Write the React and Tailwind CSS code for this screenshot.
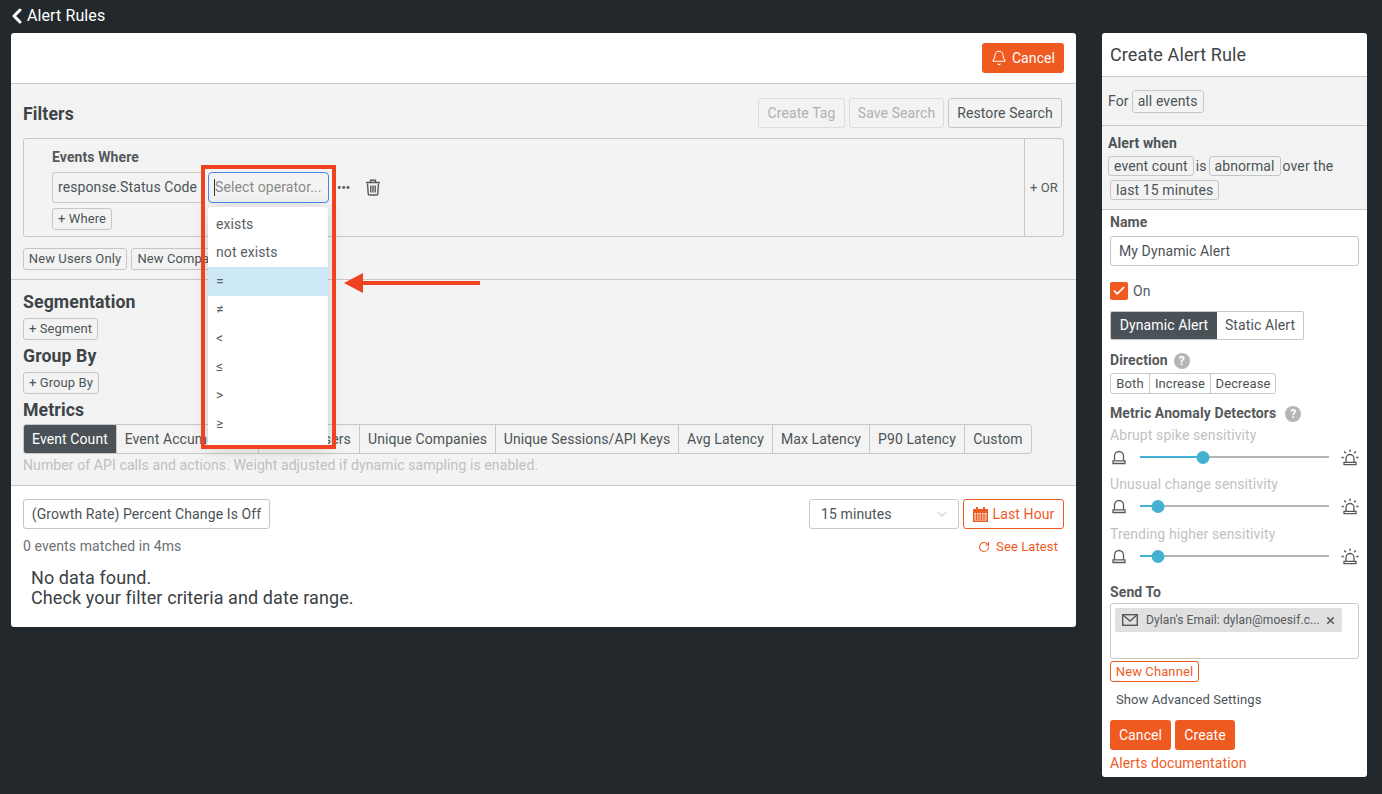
import { Bell, ChevronLeft, ChevronDown, RotateCw, X, Check } from 'lucide-react';

const btn = 'rounded-[3px] border border-[#c4c6c7] text-[#4c5357] whitespace-nowrap';
const orangeBtn = 'h-[30px] rounded-[3px] bg-[#ee5a1f] text-white text-[14px] whitespace-nowrap';
const tabs = [
  ['Event Count', 'w-[92px]'],
  ['Event Accumulation', 'w-[142px]'],
  ['Unique Users', 'w-[101px]'],
  ['Unique Companies', 'w-[136px]'],
  ['Unique Sessions/API Keys', 'w-[183px]'],
  ['Avg Latency', 'w-[94px]'],
  ['Max Latency', 'w-[97px]'],
  ['P90 Latency', 'w-[95px]'],
  ['Custom', 'w-[67px]'],
];
const operators = ['exists', 'not exists', '=', '≠', '<', '≤', '>', '≥'];

function Trash() {
  return (
    <svg width="16" height="17" viewBox="0 0 16 17" fill="none" stroke="#55595c" strokeWidth="1.4">
      <path d="M1 3.5h14M5.5 3V1.200h5V3" />
      <path d="M2.500 4.500l.7 10.300c0 .7.5 1.200 1.200 1.200h7.200c.7 0 1.200-.5 1.200-1.200l.7-10.300M5.800 6.500v7M8 6.500v7M10.200 6.500v7" />
    </svg>
  );
}

function Calendar() {
  return (
    <svg width="15" height="15" viewBox="0 0 15 15">
      <path fill="#ee5a1f" d="M3 0h2v2h5V0h2v2h3v13H0V2h3z" />
      <path fill="#fff" d="M1.500 6h12v7.500h-12z" />
      <path stroke="#ee5a1f" strokeWidth="1" d="M1.500 8h12M1.500 10h12M1.500 12h12M3.500 6v7.500M6 6v7.500M8.500 6v7.500M11 6v7.500" />
    </svg>
  );
}

function Mail() {
  return (
    <svg width="16" height="12" viewBox="0 0 16 12" fill="none" stroke="#55595c" strokeWidth="1.4">
      <rect x="0.7" y="0.7" width="14.6" height="10.6" />
      <path d="M1 1l7 6 7-6" />
    </svg>
  );
}

function Help() {
  return <span className="flex h-[16px] w-[16px] items-center justify-center rounded-full bg-[#b5b5b5] text-[12px] font-bold text-white">?</span>;
}

function QuietBell() {
  return (
    <svg width="14" height="15" viewBox="0 0 14 15" fill="none" stroke="#55595c" strokeWidth="1.3">
      <path d="M2.500 10.500V6a4.500 4.500 0 0 1 9 0v4.500" />
      <path d="M1 10.800h12v2.700H1z" />
    </svg>
  );
}

function LoudBell() {
  return (
    <svg width="18" height="17" viewBox="0 0 18 17" fill="none" stroke="#55595c" strokeWidth="1.3">
      <path d="M5 13V9.500a4 4 0 0 1 8 0V13" />
      <path d="M3 13.300h12v2.400H3z" />
      <path d="M9 0.500v2.500M3.200 2.500l1.700 1.800M14.800 2.500l-1.700 1.800M0.500 8.500h2.300M15.200 8.500h2.300" />
    </svg>
  );
}

function Slider({ label, pct, mt }) {
  return (
    <div className={mt}>
      <div className="h-[17px] text-[14px] leading-[17px] text-[#c2c2c2]">{label}</div>
      <div className="mt-[6px] flex h-[14px] items-center">
        <div className="ml-[2px] w-[28px]"><QuietBell /></div>
        <div className="relative h-[2px] w-[189px] bg-[#b3b3b3]">
          <div className="h-[2px] bg-[#44b1d3]" style={{ width: `${pct}%` }} />
          <div className="absolute top-[-5.5px] h-[13px] w-[13px] -translate-x-1/2 rounded-full bg-[#44b1d3]" style={{ left: `${pct}%` }} />
        </div>
        <div className="ml-[12px]"><LoudBell /></div>
      </div>
    </div>
  );
}

function OperatorSelect() {
  return (
    <div className="relative z-10 ml-[4px] w-[121px]">
      <div className="flex h-[31px] items-center rounded-[4px] border border-[#4a86e8] bg-[#f3f3f3] pl-[5px] text-[#8a8a8a]">
        <span className="h-[17px] w-px bg-[#333]" />
        <span className="whitespace-nowrap">Select operator...</span>
      </div>
      <div className="absolute left-0 top-[35px] h-[240px] w-[120px] overflow-hidden rounded-[4px] bg-white pt-[3px] shadow-[0_2px_18px_rgba(0,0,0,0.16)]">
        {operators.map((op) => (
          <div key={op} className={`flex h-[28.5px] items-center pl-[8px] text-[#5a6064] ${op === '=' ? 'bg-[#cde8f7]' : ''}`}>{op}</div>
        ))}
      </div>
      {/* annotation drawn over the screenshot */}
      <div className="absolute left-[-7px] top-[-7px] h-[284px] w-[135px] border-[4px] border-[#ee4220]" />
      <svg className="absolute left-[136px] top-[101px]" width="137" height="20" viewBox="0 0 137 20">
        <path fill="#ee4220" d="M0 10L19 0v8h117v4H19v8z" />
      </svg>
    </div>
  );
}

function MainPanel() {
  return (
    <div className="h-[594px] w-[1065px] overflow-hidden rounded-[3px] bg-white">
      <div className="flex h-[51px] justify-end border-b border-[#c8c8c8] pr-[12px] pt-[10px]">
        <button className={`${orangeBtn} flex w-[82px] items-center justify-center gap-[5px]`}>
          <Bell size={16} strokeWidth={1.6} />Cancel
        </button>
      </div>

      <div className="h-[196px] border-b border-[#c8c8c8] bg-[#f3f3f3] px-[12px] pt-[14px]">
        <div className="flex h-[30px] items-center">
          <h2 className="mt-[2px] text-[17.7px] font-bold text-[#3d4448]">Filters</h2>
          <div className="ml-auto mr-[2px] flex gap-[4px]">
            <button className="h-[30px] w-[87px] rounded-[3px] border border-[#dcdcdc] text-[#b0b0b0]">Create Tag</button>
            <button className="h-[30px] w-[95px] rounded-[3px] border border-[#dcdcdc] text-[#b0b0b0]">Save Search</button>
            <button className={`${btn} h-[30px] w-[114px]`}>Restore Search</button>
          </div>
        </div>
        <div className="mt-[10px] flex h-[99px] w-[1041px] rounded-[3px] border border-[#c8c8c8]">
          <div className="flex-1 pl-[28px] pt-[10px]">
            <div className="h-[17px] text-[14px] font-bold leading-[17px] text-[#55595c]">Events Where</div>
            <div className="mt-[6px] flex h-[31px] items-center">
              <div className="flex h-[31px] w-[152px] items-center whitespace-nowrap rounded-l-[3px] border border-[#c8c8c8] pl-[5px] text-[#4c5357]">response.Status Code</div>
              <OperatorSelect />
              <span className="ml-[8px] text-[12px] font-bold leading-none text-[#55595c]">•••</span>
              <span className="ml-[15px]"><Trash /></span>
            </div>
            <button className={`${btn} mt-[5px] h-[22px] w-[60px] text-[13px]`}>+ Where</button>
          </div>
          <div className="flex w-[39px] items-center justify-center border-l border-[#c8c8c8] text-[13px] text-[#55595c]">+ OR</div>
        </div>
        <div className="mt-[11px] flex gap-[4px]">
          <button className={`${btn} h-[22px] w-[104px] text-[13px]`}>New Users Only</button>
          <button className={`${btn} h-[22px] w-[138px] text-[13px]`}>New Companies Only</button>
        </div>
      </div>

      <div className="h-[206px] border-b border-[#c8c8c8] bg-[#f3f3f3] px-[12px] pt-[12px]">
        <h2 className="h-[20px] text-[17.7px] font-bold leading-[20px] text-[#3d4448]">Segmentation</h2>
        <button className={`${btn} mt-[6px] block h-[22px] w-[75px] text-[13px]`}>+ Segment</button>
        <h2 className="mt-[6px] h-[20px] text-[17.7px] font-bold leading-[20px] text-[#3d4448]">Group By</h2>
        <button className={`${btn} mt-[6px] block h-[22px] w-[76px] text-[13px]`}>+ Group By</button>
        <h2 className="mt-[6px] h-[20px] text-[17.7px] font-bold leading-[20px] text-[#3d4448]">Metrics</h2>
        <div className="mt-[4px] flex h-[30px] w-[1009px] overflow-hidden rounded-[3px] border border-[#c8c8c8]">
          {tabs.map(([t, w], i) => (
            <div key={t} className={`flex shrink-0 items-center justify-center whitespace-nowrap ${w} ${i === 0 ? 'bg-[#4a5257] text-white' : 'border-l border-[#c8c8c8] text-[#4c5357]'}`}>{t}</div>
          ))}
        </div>
        <p className="mt-[3px] h-[17px] text-[14px] leading-[17px] text-[#c0c0c0]">Number of API calls and actions. Weight adjusted if dynamic sampling is enabled.</p>
      </div>

      <div className="px-[12px] pt-[13px]">
        <div className="flex h-[30px] items-center">
          <button className={`${btn} h-[30px] w-[247px]`}>(Growth Rate) Percent Change Is Off</button>
          <div className="ml-auto flex h-[30px] w-[150px] items-center justify-between rounded-[3px] border border-[#c8c8c8] pl-[11px] pr-[8px] text-[#4c5357]">
            15 minutes<ChevronDown size={16} color="#d8d8d8" />
          </div>
          <button className="ml-[4px] flex h-[30px] w-[101px] items-center justify-center gap-[5px] rounded-[3px] border border-[#ee5a1f] text-[#ee5a1f]"><Calendar />Last Hour</button>
        </div>
        <div className="mt-[9px] flex h-[17px] items-center justify-between leading-[17px]">
          <span className="text-[#6b7074]">0 events matched in 4ms</span>
          <span className="mr-[6px] flex items-center gap-[6px] text-[13px] text-[#ee5a1f]"><RotateCw size={12} strokeWidth={2.2} />See Latest</span>
        </div>
        <div className="mt-[13px] pl-[8px] text-[18px] leading-[20px] text-[#3a4044]">
          <div>No data found.</div>
          <div>Check your filter criteria and date range.</div>
        </div>
      </div>
    </div>
  );
}

function SidePanel() {
  return (
    <div className="ml-[26px] h-[744px] w-[265px] overflow-hidden rounded-[3px] bg-white">
      <div className="flex h-[44px] items-center border-b border-[#c8c8c8] pl-[8px] text-[18px] text-[#3d4448]">Create Alert Rule</div>
      <div className="flex h-[49px] items-center gap-[3px] border-b border-[#c8c8c8] bg-[#f3f3f3] pl-[6px] text-[#4c5357]">
        For<span className={`${btn} flex h-[23px] items-center px-[5px]`}>all events</span>
      </div>
      <div className="h-[84px] border-b border-[#c8c8c8] bg-[#f3f3f3] pl-[6px] pt-[9px] text-[#4c5357]">
        <div className="h-[16px] text-[14px] font-bold leading-[16px]">Alert when</div>
        <div className="mt-[5px] flex h-[20px] items-center gap-[2px]">
          <span className={`${btn} flex h-[20px] items-center px-[5px]`}>event count</span>is
          <span className={`${btn} flex h-[20px] items-center px-[5px]`}>abnormal</span>
          <span>over the</span>
        </div>
        <span className={`${btn} ml-[2px] mt-[4px] flex h-[20px] w-fit items-center px-[5px]`}>last 15 minutes</span>
      </div>

      <div className="px-[8px] pt-[4px]">
        <div className="h-[17px] text-[14px] font-bold leading-[17px] text-[#55595c]">Name</div>
        <div className={`${btn} mt-[5px] flex h-[30px] w-[249px] items-center pl-[8px]`}>My Dynamic Alert</div>
        <div className="mt-[16px] flex h-[18px] items-center gap-[5px] text-[#55595c]">
          <span className="flex h-[18px] w-[18px] items-center justify-center rounded-[2px] bg-[#ee5a1f]"><Check size={14} color="#fff" strokeWidth={3} /></span>On
        </div>
        <div className="mt-[11px] flex h-[29px] w-[194px] overflow-hidden rounded-[2px] border border-[#c8c8c8]">
          <div className="flex w-[106px] items-center justify-center bg-[#4a5257] text-white">Dynamic Alert</div>
          <div className="flex flex-1 items-center justify-center text-[#4c5357]">Static Alert</div>
        </div>
        <div className="mt-[12px] flex h-[17px] items-center gap-[6px] text-[14px] font-bold text-[#55595c]">Direction <Help /></div>
        <div className="mt-[4px] flex h-[21px] w-[166px] rounded-[3px] border border-[#c8c8c8] text-[13px] text-[#4c5357]">
          <div className="flex w-[38px] items-center justify-center">Both</div>
          <div className="flex w-[61px] items-center justify-center border-l border-[#c8c8c8]">Increase</div>
          <div className="flex flex-1 items-center justify-center border-l border-[#c8c8c8]">Decrease</div>
        </div>
        <div className="mt-[11px] flex h-[17px] items-center gap-[9px] text-[14px] font-bold text-[#55595c]">Metric Anomaly Detectors <Help /></div>
        <Slider label="Abrupt spike sensitivity" pct={33.5} mt="mt-[5px]" />
        <Slider label="Unusual change sensitivity" pct={9.5} mt="mt-[12px]" />
        <Slider label="Trending higher sensitivity" pct={9.5} mt="mt-[13px]" />

        <div className="mt-[21px] h-[17px] text-[14px] font-bold leading-[17px] text-[#55595c]">Send To</div>
        <div className="mt-[2px] h-[56px] w-[249px] rounded-[3px] border border-[#c8c8c8] p-[4px]">
          <div className="flex h-[24px] w-[227px] items-center rounded-[2px] bg-[#e0e0e0] pl-[7px] text-[12px] text-[#55595c]">
            <Mail /><span className="ml-[8px] w-[172px] whitespace-nowrap">Dylan's Email: dylan@moesif.c...</span>
            <X size={11} strokeWidth={3.5} className="ml-[7px]" />
          </div>
        </div>
        <button className="mt-[2px] block h-[21px] w-[89px] rounded-[3px] border border-[#ee5a1f] text-[13px] text-[#ee5a1f]">New Channel</button>
        <div className="mt-[9px] h-[17px] pl-[6px] text-[13px] leading-[17px] text-[#4c5357]">Show Advanced Settings</div>
        <div className="mt-[12px] flex gap-[4px]">
          <button className={`${orangeBtn} w-[61px]`}>Cancel</button>
          <button className={`${orangeBtn} w-[60px]`}>Create</button>
        </div>
        <div className="mt-[5px] text-[14px] leading-[17px] text-[#ee5a1f]">Alerts documentation</div>
      </div>
    </div>
  );
}

export default function App() {
  return (
    <div className="h-[794px] w-[1382px] overflow-hidden bg-[#23282d] font-[Roboto,sans-serif] text-[14px] tracking-[0.1px]">
      <div className="flex h-[33px] items-center pb-[2px] pl-[5px] text-[16px] text-white">
        <ChevronLeft size={24} strokeWidth={3} className="mr-[-2px]" />Alert Rules
      </div>
      <div className="flex pl-[11px]">
        <MainPanel />
        <SidePanel />
      </div>
    </div>
  );
}
